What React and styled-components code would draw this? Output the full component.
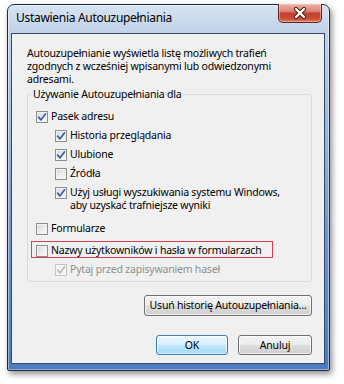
import React from "react";
import styled, { createGlobalStyle } from "styled-components";

const Global = createGlobalStyle`
  html, body { margin: 0; padding: 0; background: #ffffff; }
  body { width: 344px; height: 384px; overflow: hidden; font-family: "Noto Sans", "Open Sans", sans-serif; }
  * { box-sizing: border-box; }
`;

const Stage = styled.div`
  padding: 4px 0 0 7px;
`;

const Window = styled.div`
  width: 323px;
  height: 367px;
  border: 1px solid #1d2a40;
  border-radius: 7px 7px 2px 2px;
  background: linear-gradient(180deg, #d7e3f1 0%, #bfd2ea 8%, #a0bbdf 30%, #6e97ce 62%, #4a7bc2 100%);
  box-shadow: 2px 3px 6px rgba(0, 0, 0, 0.45), inset 0 0 0 1px rgba(255, 255, 255, 0.45);
  display: flex;
  flex-direction: column;
`;

const TitleBar = styled.div`
  height: 28px;
  display: flex;
  align-items: flex-start;
  padding-left: 8px;
`;

const Title = styled.div`
  font-size: 12px;
  line-height: 16px;
  margin-top: 5px;
  color: #000;
  letter-spacing: -0.3px;
`;

const CloseButton = styled.div`
  margin-left: auto;
  margin-right: 7px;
  margin-top: -1px;
  width: 44px;
  height: 19px;
  border: 1px solid #5b2520;
  border-top: none;
  border-radius: 0 0 5px 5px;
  background: linear-gradient(180deg, #e9b1a6 0%, #dc8677 40%, #c23f2c 52%, #c94c36 80%, #e07a5c 100%);
  box-shadow: inset 0 0 0 1px rgba(255, 220, 210, 0.45);
  display: flex;
  align-items: center;
  justify-content: center;
`;

const Frame = styled.div`
  flex: 1;
  display: flex;
  padding: 0 4px 6px 3px;
`;

const Panel = styled.div`
  flex: 1;
  border: 1px solid #33496b;
  background: #f0f0f0;
  padding: 13px 12px 0 15px;
  display: flex;
  flex-direction: column;
  font-size: 10.5px;
  letter-spacing: -0.2px;
  line-height: 13px;
  color: #000;
`;

const Intro = styled.p`
  margin: 0;
  width: 270px;
`;

const Group = styled.fieldset`
  margin: 2px 0 0 0;
  padding: 0 3px 5px 3px;
  border: 1px solid #d3dbe1;
  border-radius: 3px;
  display: flex;
  flex-direction: column;
  min-width: 0;
`;

const Legend = styled.legend`
  padding: 0 2px;
  line-height: 13px;
`;

const Row = styled.label`
  display: flex;
  align-items: flex-start;
  gap: 3px;
  white-space: nowrap;
  padding-left: ${(p) => p.$indent}px;
  margin-top: ${(p) => p.$gap}px;
  color: ${(p) => (p.$disabled ? "#8f8f8f" : "#000")};
`;

const Highlight = styled.div`
  margin-top: 6px;
  width: 242px;
  border: 1px solid #d4414f;
  padding: 2px 0 0 4px;
  height: 17px;
  display: flex;
`;

const Box = styled.span`
  flex: none;
  width: 12px;
  height: 12px;
  margin-top: 0.5px;
  border: 1px solid ${(p) => (p.$disabled ? "#c4c4c4" : "#8e8f8f")};
  background: ${(p) =>
    p.$disabled
      ? "#f4f4f4"
      : "linear-gradient(135deg, #cfd3d9 0%, #e9eaec 45%, #fbfbfb 100%)"};
  box-shadow: inset 0 0 0 1px ${(p) => (p.$disabled ? "#f7f7f7" : "#f3f3f3")};
  display: flex;
  align-items: center;
  justify-content: center;
`;

const Actions = styled.div`
  display: flex;
  justify-content: flex-end;
  gap: 10px;
  margin-top: ${(p) => p.$gap}px;
`;

const Button = styled.div`
  width: ${(p) => p.$w}px;
  height: ${(p) => p.$h}px;
  border: 1px solid ${(p) => (p.$default ? "#3c7fb1" : "#707070")};
  border-radius: 3px;
  background: ${(p) =>
    p.$default
      ? "linear-gradient(180deg, #eaf6fd 0%, #d9f0fc 48%, #bee6fd 52%, #a7d9f5 100%)"
      : "linear-gradient(180deg, #f3f3f3 0%, #ebebeb 48%, #dddddd 52%, #cfcfcf 100%)"};
  box-shadow: inset 0 0 0 1px ${(p) => (p.$default ? "rgba(255,255,255,0.6)" : "rgba(255,255,255,0.7)")};
  display: flex;
  align-items: center;
  justify-content: center;
  color: #000;
  white-space: nowrap;
`;

function Check({ checked, disabled }) {
  return (
    <Box $disabled={disabled}>
      {checked && (
        <svg width="10" height="10" viewBox="0 0 10 10">
          <path
            d="M1.6 5.2 L4 7.8 L8.6 1.8"
            fill="none"
            stroke={disabled ? "#b9b9b9" : "#3a5ca8"}
            strokeWidth="1.7"
            strokeLinecap="round"
            strokeLinejoin="round"
          />
        </svg>
      )}
    </Box>
  );
}

function Option({ label, checked, level, gap = 6, disabled, indent }) {
  const pad = indent !== undefined ? indent : level ? 24 : 5;
  return (
    <Row $indent={pad} $gap={gap} $disabled={disabled}>
      <Check checked={checked} disabled={disabled} />
      <span>{label}</span>
    </Row>
  );
}

export default function App() {
  return (
    <>
      <Global />
      <Stage>
        <Window>
          <TitleBar>
            <Title>Ustawienia Autouzupełniania</Title>
            <CloseButton>
              <svg width="16" height="12" viewBox="0 0 16 12">
                <path d="M4 2 L12 10 M12 2 L4 10" stroke="#4a1712" strokeWidth="4.2" strokeLinecap="round" />
                <path d="M4 2 L12 10 M12 2 L4 10" stroke="#ffffff" strokeWidth="2.4" strokeLinecap="round" />
              </svg>
            </CloseButton>
          </TitleBar>
          <Frame>
            <Panel>
              <Intro>
                Autouzupełnianie wyświetla listę możliwych trafień
                <br />
                zgodnych z wcześniej wpisanymi lub odwiedzonymi
                <br />
                adresami.
              </Intro>
              <Group>
                <Legend>Używanie Autouzupełniania dla</Legend>
                <Option label="Pasek adresu" checked gap={9} />
                <Option label="Historia przeglądania" checked level={1} />
                <Option label="Ulubione" checked level={1} />
                <Option label="Źródła" level={1} />
                <Option
                  label={
                    <>
                      Użyj usługi wyszukiwania systemu Windows,
                      <br />
                      aby uzyskać trafniejsze wyniki
                    </>
                  }
                  checked
                  level={1}
                />
                <Option label="Formularze" gap={10} />
                <Highlight>
                  <Option label="Nazwy użytkowników i hasła w formularzach" gap={0} indent={0} />
                </Highlight>
                <Option label="Pytaj przed zapisywaniem haseł" checked disabled level={1} gap={5} />
              </Group>
              <Actions $gap={13}>
                <Button $w={168} $h={21}>Usuń historię Autouzupełniania...</Button>
              </Actions>
              <Actions $gap={19}>
                <Button $w={72} $h={20} $default>OK</Button>
                <Button $w={74} $h={20}>Anuluj</Button>
              </Actions>
            </Panel>
          </Frame>
        </Window>
      </Stage>
    </>
  );
}
